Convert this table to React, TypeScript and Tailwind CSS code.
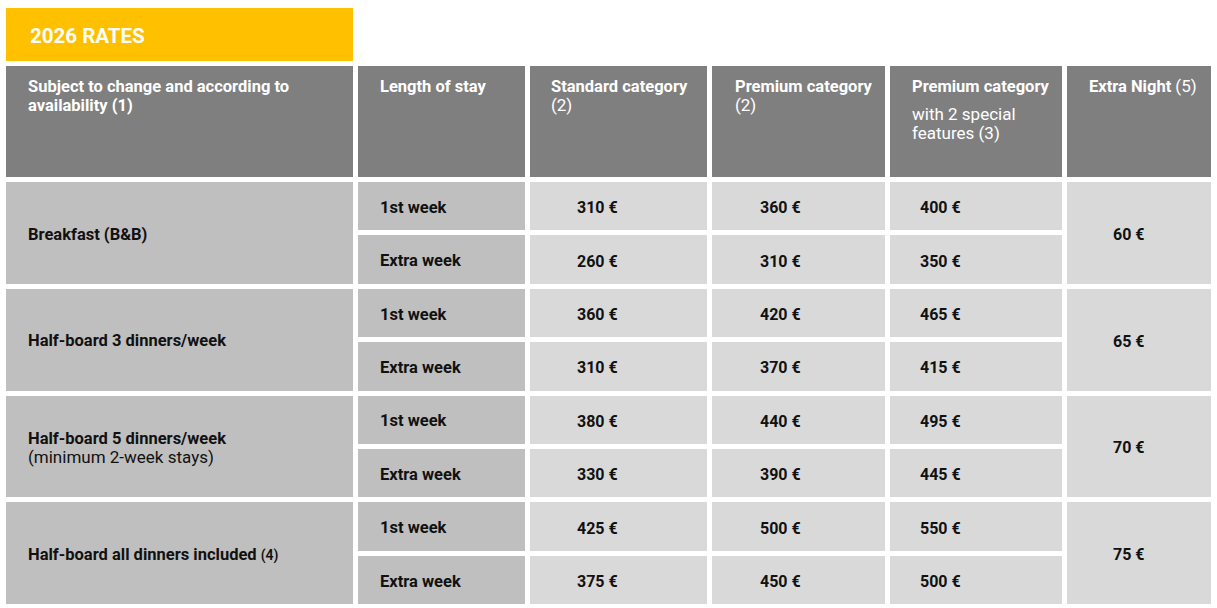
import React from "react";

const groups = [
  {
    label: <span className="font-bold">Breakfast (B&amp;B)</span>,
    prices: [
      ["310 €", "360 €", "400 €"],
      ["260 €", "310 €", "350 €"],
    ],
    extra: "60 €",
  },
  {
    label: <span className="font-bold">Half-board 3 dinners/week</span>,
    prices: [
      ["360 €", "420 €", "465 €"],
      ["310 €", "370 €", "415 €"],
    ],
    extra: "65 €",
  },
  {
    label: (
      <div className="leading-[19px]">
        <div className="font-bold">Half-board 5 dinners/week</div>
        <div className="text-[17px] font-normal">(minimum 2-week stays)</div>
      </div>
    ),
    prices: [
      ["380 €", "440 €", "495 €"],
      ["330 €", "390 €", "445 €"],
    ],
    extra: "70 €",
  },
  {
    label: (
      <span className="font-bold">
        Half-board all dinners included{" "}
        <span className="text-[14px] font-semibold">(4)</span>
      </span>
    ),
    prices: [
      ["425 €", "500 €", "550 €"],
      ["375 €", "450 €", "500 €"],
    ],
    extra: "75 €",
  },
];

const stays = ["1st week", "Extra week"];
const pricePad = ["pl-[47px]", "pl-[48px]", "pl-[30px]"];

export default function App() {
  return (
    <div className="min-h-screen bg-white pt-[8px] pl-[6px] font-['Roboto','Liberation_Sans',sans-serif] text-[16.5px] text-[#111]">
      <div className="w-[347px] h-[53px] mb-[5px] bg-[#ffc000] flex items-center pl-[24px] pt-[4px] text-white font-bold text-[20.5px]">
        2026 RATES
      </div>

      <div className="grid grid-cols-[347px_167px_177px_173px_172px_144px] grid-rows-[111px_repeat(8,48.4px)] gap-[5px]">
        {/* header */}
        <div className="bg-[#7f7f7f] text-white font-bold pl-[22px] pr-4 pt-[11px] leading-[19px]">
          Subject to change and according to availability (1)
        </div>
        <div className="bg-[#7f7f7f] text-white font-bold pl-[22px] pt-[11px] leading-[19px]">
          Length of stay
        </div>
        <div className="bg-[#7f7f7f] text-white pl-[21px] pt-[11px] leading-[19px]">
          <div className="font-bold">Standard category</div>
          <div className="text-[17px]">(2)</div>
        </div>
        <div className="bg-[#7f7f7f] text-white pl-[23px] pt-[11px] leading-[19px]">
          <div className="font-bold">Premium category</div>
          <div className="text-[17px]">(2)</div>
        </div>
        <div className="bg-[#7f7f7f] text-white pl-[22px] pt-[11px] leading-[19px]">
          <div className="font-bold">Premium category</div>
          <div className="text-[17px] mt-[9px] pr-6">
            with 2 special features (3)
          </div>
        </div>
        <div className="bg-[#7f7f7f] text-white pl-[22px] pt-[11px] leading-[19px]">
          <span className="font-bold">Extra Night</span>{" "}
          <span className="text-[17px]">(5)</span>
        </div>

        {/* body */}
        {groups.map((g, gi) => (
          <React.Fragment key={gi}>
            {g.prices.map((row, ri) => (
              <React.Fragment key={ri}>
                {ri === 0 && (
                  <div className="row-span-2 bg-[#bfbfbf] flex items-center pl-[22px] pt-[4px]">
                    {g.label}
                  </div>
                )}
                <div className="bg-[#bfbfbf] flex items-center pl-[22px] pt-[4px] font-bold">
                  {stays[ri]}
                </div>
                {row.map((p, pi) => (
                  <div
                    key={pi}
                    className={`bg-[#d9d9d9] flex items-center pt-[4px] font-bold text-[16px] ${pricePad[pi]}`}
                  >
                    {p}
                  </div>
                ))}
                {ri === 0 && (
                  <div className="row-span-2 bg-[#d9d9d9] flex items-center pl-[46px] pt-[4px] font-bold text-[16px]">
                    {g.extra}
                  </div>
                )}
              </React.Fragment>
            ))}
          </React.Fragment>
        ))}
      </div>
    </div>
  );
}
